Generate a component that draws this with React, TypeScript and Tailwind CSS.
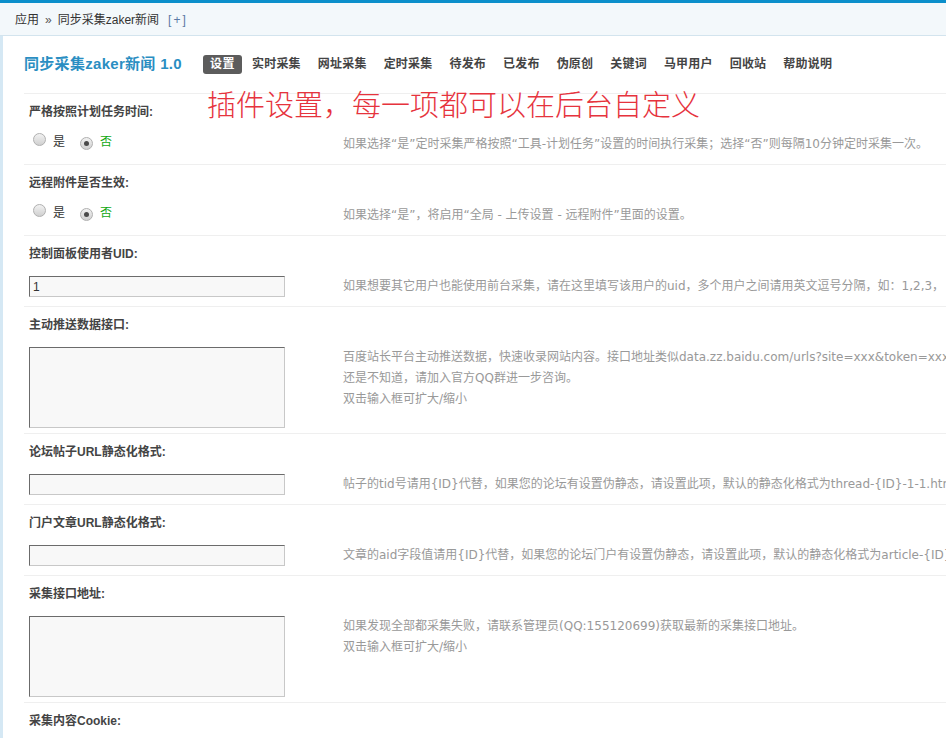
import React from "react";

function Radio({ checked }: { checked?: boolean }) {
  return (
    <span className="inline-flex h-[13px] w-[13px] items-center justify-center rounded-full border border-[#b0b0b0] bg-gradient-to-b from-[#f2f2f2] to-[#d0d0d0]">
      {checked ? <span className="h-[5px] w-[5px] rounded-full bg-[#4a4a4a]" /> : null}
    </span>
  );
}

function RadioPair() {
  return (
    <div className="flex h-[15px] items-center">
      <span className="ml-[4px]"><Radio /></span>
      <span className="ml-[7px] text-[#333]">是</span>
      <span className="ml-[15px]"><Radio checked /></span>
      <span className="ml-[7px] text-[#11a811]">否</span>
    </div>
  );
}

function TextInput({ value }: { value?: string }) {
  return (
    <div className="flex h-[21px] w-[256px] items-center border border-t-[#6b6b6b] border-l-[#6b6b6b] border-r-[#c8c8c8] border-b-[#c8c8c8] bg-[#f8f8f8] pl-[3px] text-[#333]">
      {value}
    </div>
  );
}

function TextArea() {
  return (
    <div className="h-[81px] w-[256px] border border-t-[#6b6b6b] border-l-[#6b6b6b] border-r-[#c8c8c8] border-b-[#c8c8c8] bg-[#f8f8f8]" />
  );
}

function Section({
  label,
  control,
  desc,
}: {
  label: string;
  control?: React.ReactNode;
  desc?: React.ReactNode;
}) {
  return (
    <div className="border-t border-[#efefef]">
      <div className="h-[35px] pl-[5px] pt-[8px] text-[12px] font-bold leading-[20px] text-[#444]">
        {label}
      </div>
      {control !== undefined ? (
        <div className="flex min-h-[35px]">
          <div className="w-[319px] shrink-0 pl-[5px] pt-[5px] pb-[5px]">{control}</div>
          <div className="whitespace-nowrap pt-[5px] font-['DejaVu_Sans','Noto_Sans_CJK_SC',sans-serif] text-[12px] leading-[21px] text-[#999]">
            {desc}
          </div>
        </div>
      ) : null}
    </div>
  );
}

const navItems = ["设置", "实时采集", "网址采集", "定时采集", "待发布", "已发布", "伪原创", "关键词", "马甲用户", "回收站", "帮助说明"];

export default function App() {
  return (
    <div className="relative h-[741px] w-full overflow-hidden bg-white font-['Liberation_Sans','Noto_Sans_CJK_SC',sans-serif] text-[12px]">
      <div className="h-[3px] bg-[#0b8fcb]" />
      <div className="flex h-[33px] items-center border-b border-[#d3e4ee] bg-[#f3f8fb] pl-[15px] pt-[2px] text-[#333]">
        <span>应用</span>
        <span className="mx-[6px] text-[#555]">»</span>
        <span>同步采集zaker新闻</span>
        <span className="ml-[9px] tracking-[2px] text-[#5a79a5]">[+]</span>
      </div>
      <div className="flex">
        <div className="w-[3px] shrink-0 self-stretch bg-[#d5e8f4]" />
        <div className="min-w-0 flex-1 pl-[21px]">
          <div className="flex h-[57px] items-center">
            <div className="w-[179px] shrink-0 text-[15px] font-bold tracking-[0.3px] text-[#2a8ec2]">
              同步采集zaker新闻 1.0
            </div>
            <div className="flex items-center">
              {navItems.map((n, i) => (
                <span
                  key={n}
                  className={
                    i === 0
                      ? "mr-[3px] rounded-[3px] bg-[#5c5c5c] px-[7px] text-[12px] font-bold leading-[19px] tracking-[0.5px] text-white"
                      : "mr-[3px] px-[7px] text-[12px] font-bold leading-[19px] tracking-[0.2px] text-[#444]"
                  }
                >
                  {n}
                </span>
              ))}
            </div>
          </div>

          <Section
            label="严格按照计划任务时间:"
            control={<RadioPair />}
            desc="如果选择“是”定时采集严格按照“工具-计划任务”设置的时间执行采集；选择“否”则每隔10分钟定时采集一次。"
          />
          <Section
            label="远程附件是否生效:"
            control={<RadioPair />}
            desc="如果选择“是”，将启用“全局 - 上传设置 - 远程附件”里面的设置。"
          />
          <Section
            label="控制面板使用者UID:"
            control={<TextInput value="1" />}
            desc="如果想要其它用户也能使用前台采集，请在这里填写该用户的uid，多个用户之间请用英文逗号分隔，如：1,2,3，"
          />
          <Section
            label="主动推送数据接口:"
            control={<TextArea />}
            desc={
              <>
                百度站长平台主动推送数据，快速收录网站内容。接口地址类似data.zz.baidu.com/urls?site=xxx&amp;token=xxx，如果
                <br />
                还是不知道，请加入官方QQ群进一步咨询。
                <br />
                双击输入框可扩大/缩小
              </>
            }
          />
          <Section
            label="论坛帖子URL静态化格式:"
            control={<TextInput />}
            desc="帖子的tid号请用{ID}代替，如果您的论坛有设置伪静态，请设置此项，默认的静态化格式为thread-{ID}-1-1.html"
          />
          <Section
            label="门户文章URL静态化格式:"
            control={<TextInput />}
            desc="文章的aid字段值请用{ID}代替，如果您的论坛门户有设置伪静态，请设置此项，默认的静态化格式为article-{ID}-1.html"
          />
          <Section
            label="采集接口地址:"
            control={<TextArea />}
            desc={
              <>
                如果发现全部都采集失败，请联系管理员(QQ:155120699)获取最新的采集接口地址。
                <br />
                双击输入框可扩大/缩小
              </>
            }
          />
          <Section label="采集内容Cookie:" />
        </div>
      </div>

      <div className="absolute left-[207px] top-[88px] whitespace-nowrap text-[29px] font-light leading-[36px] text-[#e6333d]">
        插件设置，每一项都可以在后台自定义
      </div>
    </div>
  );
}
